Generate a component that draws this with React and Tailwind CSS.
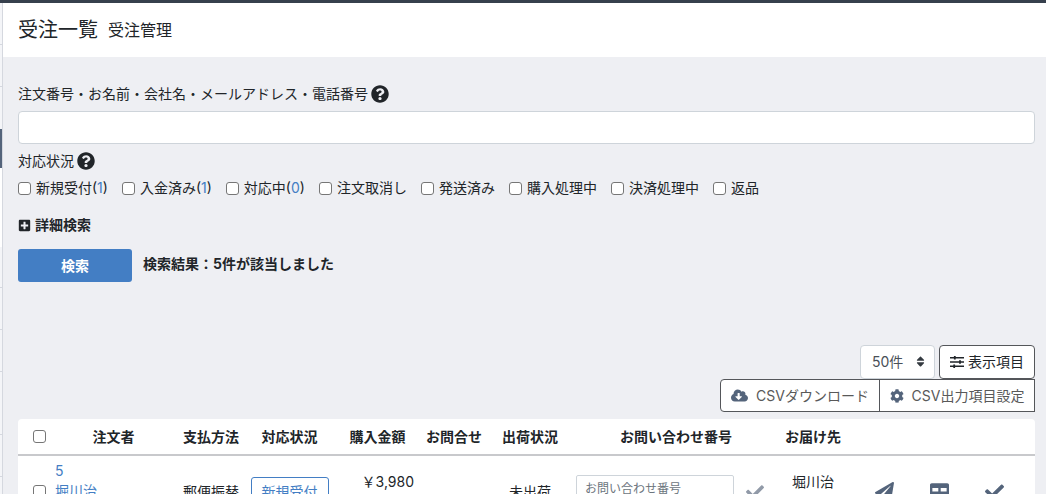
import { FaQuestionCircle, FaPlusSquare, FaCloudDownloadAlt, FaCog, FaPaperPlane, FaCheck, FaTable, FaSort } from 'react-icons/fa';

const statuses = [
  { label: '新規受付', count: 1 },
  { label: '入金済み', count: 1 },
  { label: '対応中', count: 0 },
  { label: '注文取消し' },
  { label: '発送済み' },
  { label: '購入処理中' },
  { label: '決済処理中' },
  { label: '返品' },
];

const boxClass =
  'size-[13px] shrink-0 appearance-none rounded-[3px] border border-[#767676] bg-white checked:bg-[#437ec4]';

function SlidersIcon() {
  return (
    <svg width="14" height="14" viewBox="0 0 14 14" fill="none" stroke="currentColor" strokeWidth="1.5" aria-hidden="true">
      <path d="M0 2.8h14M0 7h14M0 11.2h14" />
      <path d="M4.8 1v3.6M10 5.2v3.6M4.2 9.4V13" strokeWidth="1.8" />
    </svg>
  );
}

function SideRail() {
  return (
    <aside className="flex w-[3px] shrink-0 flex-col border-r border-[#d5d8df] bg-[#f4f5f8]">
      <div className="h-[42px] border-b border-[#d5d8df]" />
      <div className="h-[42px] border-b border-[#d5d8df]" />
      <div className="h-[42px]" />
      <div className="h-[39px] bg-[#54647b]" />
      <div className="h-[79px] bg-white" />
      <div className="h-[41px] border-b border-[#d5d8df]" />
      <div className="h-[42px] border-b border-[#d5d8df]" />
      <div className="h-[42px] border-b border-[#d5d8df]" />
      <div className="h-[63px] border-b border-[#d5d8df]" />
      <div className="h-[42px] border-b border-[#d5d8df]" />
    </aside>
  );
}

function SearchForm() {
  return (
    <form onSubmit={(e) => e.preventDefault()}>
      <label htmlFor="keyword" className="flex h-5 items-center gap-[3px]">
        注文番号・お名前・会社名・メールアドレス・電話番号
        <FaQuestionCircle size={18} />
      </label>
      <input
        id="keyword"
        type="text"
        className="mt-[7px] block h-[33px] w-full rounded border border-[#ced4da] bg-white px-3"
      />
      <fieldset className="mt-[7px]">
        <legend className="flex h-5 items-center gap-[3px]">
          対応状況
          <FaQuestionCircle size={18} />
        </legend>
        <div className="mt-[7px] flex flex-wrap gap-x-[14px]">
          {statuses.map((s) => (
            <label key={s.label} className="flex h-5 items-center gap-[5px]">
              <input type="checkbox" className={boxClass} />
              <span>
                {s.label}
                {s.count !== undefined && (
                  <>
                    (<span className="text-[#437ec4]">{s.count}</span>)
                  </>
                )}
              </span>
            </label>
          ))}
        </div>
      </fieldset>
      <button type="button" className="mt-[17px] flex h-5 items-center gap-1 font-bold">
        <FaPlusSquare size={13} />
        詳細検索
      </button>
      <div className="mt-[14px] flex items-center gap-[11px]">
        <button type="submit" className="h-[33px] w-[114px] rounded-[3px] bg-[#437ec4] font-bold text-white">
          検索
        </button>
        <span className="pb-1 font-bold">検索結果：5件が該当しました</span>
      </div>
    </form>
  );
}

function Toolbar() {
  return (
    <div className="mt-[63px] flex flex-col items-end">
      <div className="flex gap-1">
        <div className="relative">
          <select
            aria-label="表示件数"
            className="h-[34px] w-[75px] appearance-none rounded border border-[#ced4da] bg-white pl-[11px] text-[#495057]"
          >
            <option>50件</option>
          </select>
          <FaSort size={13} className="pointer-events-none absolute top-[10px] right-2 text-[#343a40]" />
        </div>
        <button type="button" className="flex h-[34px] w-24 items-center justify-center gap-1 rounded border border-[#54565a] bg-white">
          <SlidersIcon />
          表示項目
        </button>
      </div>
      <div className="flex text-[#595959]">
        <button type="button" className="flex h-[33px] w-40 items-center justify-center gap-2 rounded-l border border-[#54565a] bg-white">
          <FaCloudDownloadAlt size={17} className="text-[#54647b]" />
          CSVダウンロード
        </button>
        <button type="button" className="-ml-px flex h-[33px] w-[156px] items-center justify-center gap-2 border border-[#54565a] bg-white">
          <FaCog size={14} className="text-[#54647b]" />
          CSV出力項目設定
        </button>
      </div>
    </div>
  );
}

function OrderTable() {
  return (
    <div className="mt-[7px] overflow-hidden rounded-t bg-white">
      <table className="w-full table-fixed border-collapse text-center">
        <colgroup>
          <col className="w-[37px]" />
          <col className="w-[117px]" />
          <col className="w-[78px]" />
          <col className="w-[79px]" />
          <col className="w-[97px]" />
          <col className="w-[56px]" />
          <col className="w-[96px]" />
          <col className="w-[196px]" />
          <col className="w-[78px]" />
          <col />
        </colgroup>
        <thead>
          <tr className="h-[36px] border-b-2 border-[#c8c9cc] whitespace-nowrap">
            <th className="pl-[6px]">
              <input type="checkbox" aria-label="すべて選択" className={`${boxClass} mt-1`} />
            </th>
            <th>注文者</th>
            <th>支払方法</th>
            <th>対応状況</th>
            <th>購入金額</th>
            <th>お問合せ</th>
            <th>出荷状況</th>
            <th>お問い合わせ番号</th>
            <th>お届け先</th>
            <th aria-label="操作" />
          </tr>
        </thead>
        <tbody>
          <tr className="h-[72px] whitespace-nowrap">
            <td className="pl-[6px]">
              <input type="checkbox" aria-label="注文5を選択" className={`${boxClass} mt-1`} />
            </td>
            <td className="pt-[5px] text-left align-top">
              <a href="#order-5" className="block leading-5 text-[#437ec4]">
                5<br />
                堀川治
              </a>
            </td>
            <td>郵便振替</td>
            <td>
              <span className="inline-block rounded-[3px] border border-[#437ec4] px-[10px] py-1 text-[#437ec4]">新規受付</span>
            </td>
            <td className="pt-4 pr-3 text-right align-top">￥3,980</td>
            <td />
            <td>未出荷</td>
            <td className="pr-3">
              <div className="flex items-center justify-center gap-3">
                <input
                  type="text"
                  aria-label="お問い合わせ番号"
                  placeholder="お問い合わせ番号"
                  className="h-[34px] w-[158px] rounded-t-[2px] border border-[#ced4da] px-2 pb-[6px] text-xs placeholder:text-[#6c757d]"
                />
                <button type="button" aria-label="番号を登録">
                  <FaCheck size={18} className="text-[#919aa8]" />
                </button>
              </div>
            </td>
            <td className="pt-4 align-top">堀川治</td>
            <td className="pr-2">
              <div className="flex justify-center gap-9 text-[#54647b]">
                <button type="button" aria-label="メールを送信"><FaPaperPlane size={19} /></button>
                <button type="button" aria-label="帳票を出力"><FaTable size={19} /></button>
                <button type="button" aria-label="確認"><FaCheck size={19} /></button>
              </div>
            </td>
          </tr>
        </tbody>
      </table>
    </div>
  );
}

export default function App() {
  return (
    <div className="h-screen overflow-hidden bg-[#eeeff3] font-['Inter','Noto_Sans_CJK_JP',sans-serif] text-sm text-[#212529]">
      <div className="h-[3px] bg-[#36404d]" />
      <div className="flex min-h-full">
        <SideRail />
        <main className="min-w-0 flex-1">
          <header className="flex h-[54px] items-center gap-[10px] bg-white px-[15px]">
            <h1 className="text-xl">受注一覧</h1>
            <span className="text-base">受注管理</span>
          </header>
          <div className="pt-[27px] pr-[11px] pl-[15px]">
            <SearchForm />
            <Toolbar />
            <OrderTable />
          </div>
        </main>
      </div>
    </div>
  );
}
